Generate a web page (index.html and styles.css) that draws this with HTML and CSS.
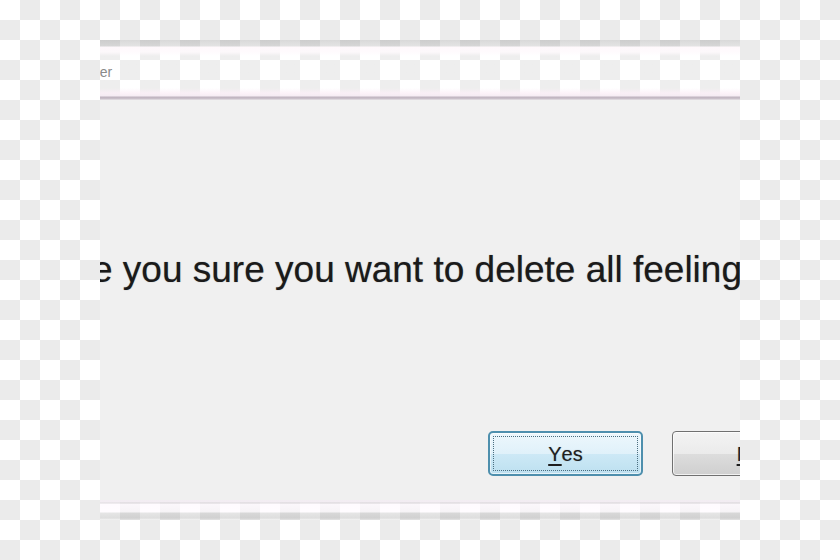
FILE: index.html
```html
<!DOCTYPE html>
<html lang="en">
<head>
<meta charset="utf-8">
<title>Delete feelings</title>
<link rel="stylesheet" href="styles.css">
</head>
<body>
<div class="page">
  <div class="dialog">
    <div class="titlebar"><span class="title">Explorer</span></div>
    <div class="content">
      <p class="message">Are you sure you want to delete all feelings?</p>
      <div class="buttons">
        <button class="btn btn-yes"><span class="focus"><u>Y</u>es</span></button>
        <button class="btn btn-no"><span class="label"><u>N</u>o</span></button>
      </div>
    </div>
    <div class="bottombar"></div>
  </div>
</div>
</body>
</html>
```
FILE: styles.css
```css
html, body {
  margin: 0;
  padding: 0;
}
body {
  width: 840px;
  height: 560px;
  overflow: hidden;
  background: repeating-conic-gradient(#ebebeb 0 25%, #ffffff 0 50%) 0 0 / 40px 40px;
  font-family: "Liberation Sans", Arial, sans-serif;
}
.page {
  padding: 40px 0 0 100px;
}
.dialog {
  width: 640px;
  display: flex;
  flex-direction: column;
  overflow: hidden;
}
.titlebar {
  height: 60px;
  box-sizing: border-box;
  padding-top: 24px;
  background: linear-gradient(to bottom,
    rgba(160,160,160,0.4) 0,
    rgba(175,175,175,0.35) 6px,
    rgba(255,248,252,0.92) 7px,
    rgba(255,250,253,0.85) 12px,
    rgba(255,255,255,0.15) 16px,
    rgba(255,255,255,0.15) 48px,
    rgba(252,240,248,0.8) 53px,
    rgba(245,235,243,0.9) 56px,
    rgba(185,172,185,0.9) 57px,
    rgba(200,190,200,0.9) 59px,
    #ece9ec 60px);
}
.title {
  display: block;
  margin-left: -40px;
  font-size: 14px;
  line-height: 16px;
  color: #8a8a8a;
  white-space: nowrap;
}
.content {
  height: 400px;
  background: #f0f0f0;
  display: flex;
  flex-direction: column;
}
.message {
  margin: 0 0 0 -45px;
  padding-top: 150px;
  font-size: 37px;
  line-height: 40px;
  color: #1a1a1a;
  text-shadow: 0 0 1px rgba(0,0,0,0.45);
  white-space: nowrap;
}
.buttons {
  display: flex;
  gap: 29px;
  margin-top: 141px;
  padding-left: 388px;
}
.btn {
  flex-shrink: 0;
  width: 155px;
  height: 45px;
  box-sizing: border-box;
  margin: 0;
  padding: 0;
  font-family: "Liberation Sans", Arial, sans-serif;
  font-size: 20px;
  color: #1e1e1e;
  text-shadow: 0 0 1px rgba(0,0,0,0.35);
  display: flex;
  align-items: center;
  justify-content: center;
}
.btn u {
  text-decoration-thickness: 2px;
  text-underline-offset: 3px;
}
.btn-yes {
  border: 2px solid #4e8fad;
  border-radius: 5px;
  padding: 3px;
  background: linear-gradient(to bottom, #edf7fc 0, #e0f1fa 50%, #cde9f6 51%, #bde0f0 100%);
  box-shadow: inset 0 0 0 1px rgba(255,255,255,0.6);
}
.focus {
  flex: 1;
  align-self: stretch;
  display: flex;
  align-items: center;
  justify-content: center;
  padding-top: 2px;
  border: 1px dotted #4b6e80;
}
.btn-no {
  border: 1px solid #707070;
  border-radius: 4px;
  background: linear-gradient(to bottom, #f3f3f3 0, #ebebeb 50%, #dddddd 51%, #cfcfcf 100%);
  box-shadow: inset 0 0 0 1px rgba(255,255,255,0.7);
}
.label {
  padding-top: 2px;
}
.bottombar {
  height: 20px;
  background: linear-gradient(to bottom,
    rgba(242,236,242,0.95) 0,
    rgba(242,236,242,0.95) 2px,
    rgba(200,195,200,0.6) 3px,
    rgba(255,250,255,0.8) 4px,
    rgba(255,250,255,0.55) 12px,
    rgba(170,170,170,0.3) 13px,
    rgba(160,160,160,0.35) 18px,
    rgba(200,200,200,0.2) 20px);
}
```
